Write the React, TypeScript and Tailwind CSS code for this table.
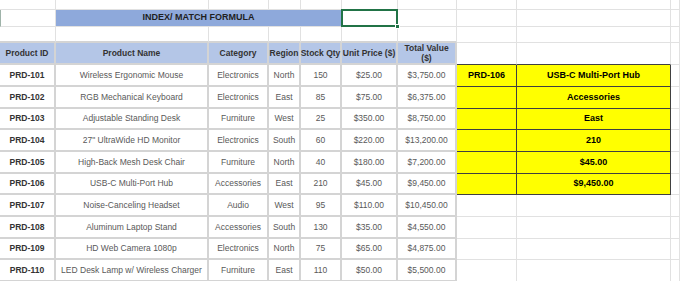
import React from 'react';

// Spreadsheet snapshot: product table on the left, INDEX/MATCH lookup result in yellow.
const rows = [
  ['PRD-101', 'Wireless Ergonomic Mouse', 'Electronics', 'North', '150', '$25.00', '$3,750.00'],
  ['PRD-102', 'RGB Mechanical Keyboard', 'Electronics', 'East', '85', '$75.00', '$6,375.00'],
  ['PRD-103', 'Adjustable Standing Desk', 'Furniture', 'West', '25', '$350.00', '$8,750.00'],
  ['PRD-104', '27" UltraWide HD Monitor', 'Electronics', 'South', '60', '$220.00', '$13,200.00'],
  ['PRD-105', 'High-Back Mesh Desk Chair', 'Furniture', 'North', '40', '$180.00', '$7,200.00'],
  ['PRD-106', 'USB-C Multi-Port Hub', 'Accessories', 'East', '210', '$45.00', '$9,450.00'],
  ['PRD-107', 'Noise-Canceling Headset', 'Audio', 'West', '95', '$110.00', '$10,450.00'],
  ['PRD-108', 'Aluminum Laptop Stand', 'Accessories', 'South', '130', '$35.00', '$4,550.00'],
  ['PRD-109', 'HD Web Camera 1080p', 'Electronics', 'North', '75', '$65.00', '$4,875.00'],
  ['PRD-110', 'LED Desk Lamp w/ Wireless Charger', 'Furniture', 'East', '110', '$50.00', '$5,500.00'],
];

const lookup = [
  ['PRD-106', 'USB-C Multi-Port Hub'],
  ['', 'Accessories'],
  ['', 'East'],
  ['', '210'],
  ['', '$45.00'],
  ['', '$9,450.00'],
];

const GRID = 'border-r border-b border-[#e1e1e1]';
const TABLE = 'border-r-2 border-b-2 border-[#d4d4d4]';
const YELLOW = 'bg-[#ffff00] border-r border-b border-[#404040] flex items-center justify-center font-bold text-[9px] text-black';

function Blank({ className = GRID }: { className?: string }) {
  return <div className={className} />;
}

export default function App() {
  return (
    <div
      className="w-[680px] h-[281px] overflow-hidden bg-white"
      style={{ fontFamily: '"Liberation Sans", Arial, sans-serif' }}
    >
      <div className="grid grid-cols-[56px_153px_60px_32px_41px_56px_59px_60px_154px_9px] grid-rows-[10px_17px_16px_22px_22px_22px_21px_22px_22px_21px_22px_22px_21px_22px]">
        {/* row: partial top */}
        {Array.from({ length: 10 }).map((_, i) => (
          <Blank key={`r0-${i}`} />
        ))}

        {/* row: title */}
        <Blank className="border-r border-b border-[#e1e1e1] border-l border-l-[#9fb3a9]" />
        <div className="col-span-4 bg-[#8ea9db] border-r border-b border-[#e1e1e1] flex items-center justify-center font-bold text-[9px] text-[#1f1f1f]">
          INDEX/ MATCH FORMULA
        </div>
        <div className={`${GRID} relative`}>
          <div className="absolute -left-px -top-px -right-px -bottom-px border-2 border-[#217346]" />
          <div className="absolute -right-[3px] -bottom-[3px] w-[5px] h-[5px] bg-[#217346] border border-white" />
        </div>
        {Array.from({ length: 4 }).map((_, i) => (
          <Blank key={`r1-${i}`} />
        ))}

        {/* row: spacer above table */}
        {Array.from({ length: 7 }).map((_, i) => (
          <Blank key={`r2-${i}`} className="border-r border-[#e1e1e1] border-b-2 border-b-[#d4d4d4]" />
        ))}
        <Blank />
        <Blank />
        <Blank />

        {/* header */}
        {['Product ID', 'Product Name', 'Category', 'Region', 'Stock Qty', 'Unit Price ($)'].map((h) => (
          <div
            key={h}
            className={`${TABLE} bg-[#b4c6e7] flex items-center justify-center font-bold text-[8.5px] text-[#333333] whitespace-nowrap`}
          >
            {h}
          </div>
        ))}
        <div className={`${TABLE} bg-[#b4c6e7] flex items-center justify-center text-center font-bold text-[8.5px] leading-[10px] text-[#333333]`}>
          Total Value
          <br />
          ($)
        </div>
        <Blank className="border-r border-[#e1e1e1] border-b border-b-[#404040]" />
        <Blank className="border-r border-[#e1e1e1] border-b border-b-[#404040]" />
        <Blank />

        {/* data */}
        {rows.map((r, ri) => (
          <React.Fragment key={r[0]}>
            {r.map((v, ci) => (
              <div
                key={ci}
                className={
                  ci === 0
                    ? `${TABLE} flex items-center justify-center font-bold text-[8.5px] text-[#333333]`
                    : `${TABLE} flex items-center justify-center text-[8.5px] text-[#595959] whitespace-nowrap`
                }
              >
                {v}
              </div>
            ))}
            {ri < lookup.length ? (
              <>
                <div className={YELLOW}>{lookup[ri][0]}</div>
                <div className={YELLOW}>{lookup[ri][1]}</div>
              </>
            ) : (
              <>
                <Blank />
                <Blank />
              </>
            )}
            <Blank />
          </React.Fragment>
        ))}
      </div>
    </div>
  );
}
